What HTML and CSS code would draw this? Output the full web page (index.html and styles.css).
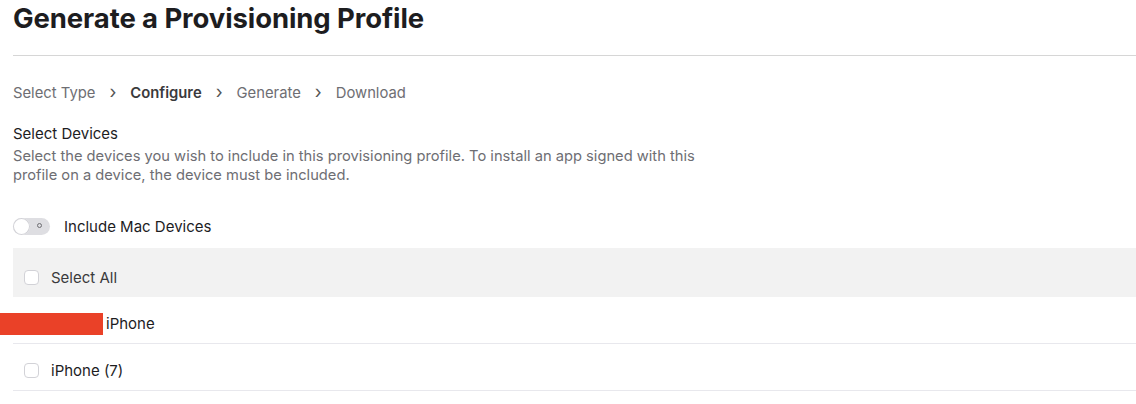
FILE: index.html
```html
<!DOCTYPE html>
<html>
<head>
<meta charset="utf-8">
<link rel="stylesheet" href="styles.css">
</head>
<body>
<main class="page">
  <h1 class="title">Generate a Provisioning Profile</h1>
  <nav class="steps">
    <span class="step">Select Type</span>
    <span class="chev">›</span>
    <span class="step current">Configure</span>
    <span class="chev">›</span>
    <span class="step">Generate</span>
    <span class="chev">›</span>
    <span class="step">Download</span>
  </nav>
  <section class="intro">
    <h2 class="label">Select Devices</h2>
    <p class="desc">Select the devices you wish to include in this provisioning profile. To install an app signed with this profile on a device, the device must be included.</p>
  </section>
  <div class="toggle-row">
    <span class="toggle"><span class="knob"></span><span class="off-mark"></span></span>
    <span class="toggle-label">Include Mac Devices</span>
  </div>
  <div class="list">
    <div class="row head"><span class="box"></span><span>Select All</span></div>
    <div class="row redacted"><span class="redact"></span><span>iPhone</span></div>
    <div class="row"><span class="box"></span><span>iPhone (7)</span></div>
  </div>
</main>
</body>
</html>
```
FILE: styles.css
```css
html, body {
  margin: 0;
  padding: 0;
  background: #fff;
}
body {
  font-family: Inter, "Liberation Sans", Arial, sans-serif;
  color: #1d1d1f;
}
.page {
  padding-left: 13px;
}
.title {
  margin: 0;
  font-size: 27.5px;
  line-height: 36px;
  font-weight: 700;
  letter-spacing: -0.1px;
  color: #1d1d1f;
  height: 55px;
  border-bottom: 1px solid #d6d6d6;
}
.steps {
  display: flex;
  align-items: center;
  gap: 14px;
  height: 20px;
  margin-top: 27px;
  font-size: 14.8px;
  color: #6e6e73;
}
.step.current {
  font-weight: 600;
  color: #3a3a3c;
}
.chev {
  font-size: 18px;
  line-height: 20px;
  color: #555;
  margin-top: -2px;
}
.intro {
  margin-top: 22px;
}
.label {
  margin: 0;
  font-size: 15px;
  font-weight: 400;
  line-height: 18px;
  color: #1d1d1f;
}
.desc {
  margin: 4px 0 0;
  width: 700px;
  font-size: 14.7px;
  line-height: 19px;
  color: #6e6e73;
}
.toggle-row {
  display: flex;
  align-items: center;
  gap: 14px;
  height: 26px;
  margin-top: 28px;
  font-size: 15px;
  color: #1d1d1f;
}
.toggle {
  position: relative;
  width: 37px;
  height: 17px;
  border-radius: 9px;
  background: #dedee2;
}
.knob {
  position: absolute;
  left: 0;
  top: 0;
  width: 17px;
  height: 17px;
  border-radius: 50%;
  background: #fff;
  box-shadow: inset 0 0 0 1px #d2d2d7;
}
.off-mark {
  position: absolute;
  left: 24px;
  top: 5px;
  width: 5px;
  height: 5px;
  box-sizing: border-box;
  border-radius: 50%;
  border: 1px solid #6e6e73;
}
.list {
  margin-top: 9px;
}
.row {
  display: flex;
  align-items: center;
  gap: 12px;
  height: 47px;
  padding-left: 11px;
  padding-top: 6px;
  box-sizing: border-box;
  border-bottom: 1px solid #e8e8ed;
  font-size: 15px;
  color: #1d1d1f;
}
.row.head {
  height: 49px;
  padding-top: 10px;
  background: #f2f2f2;
  border-bottom: none;
  color: #3a3a3c;
}
.box {
  width: 13px;
  height: 13px;
  border: 1px solid #d2d2d7;
  border-radius: 4px;
  background: #fff;
}
.row.redacted {
  padding-left: 0;
  margin-left: -13px;
  gap: 3px;
  border-bottom: none;
  position: relative;
  height: 47px;
}
.row.redacted::after {
  content: "";
  position: absolute;
  left: 13px;
  right: 0;
  bottom: 0;
  height: 1px;
  background: #e8e8ed;
}
.redact {
  width: 103px;
  height: 22px;
  background: #ea4128;
}
```
